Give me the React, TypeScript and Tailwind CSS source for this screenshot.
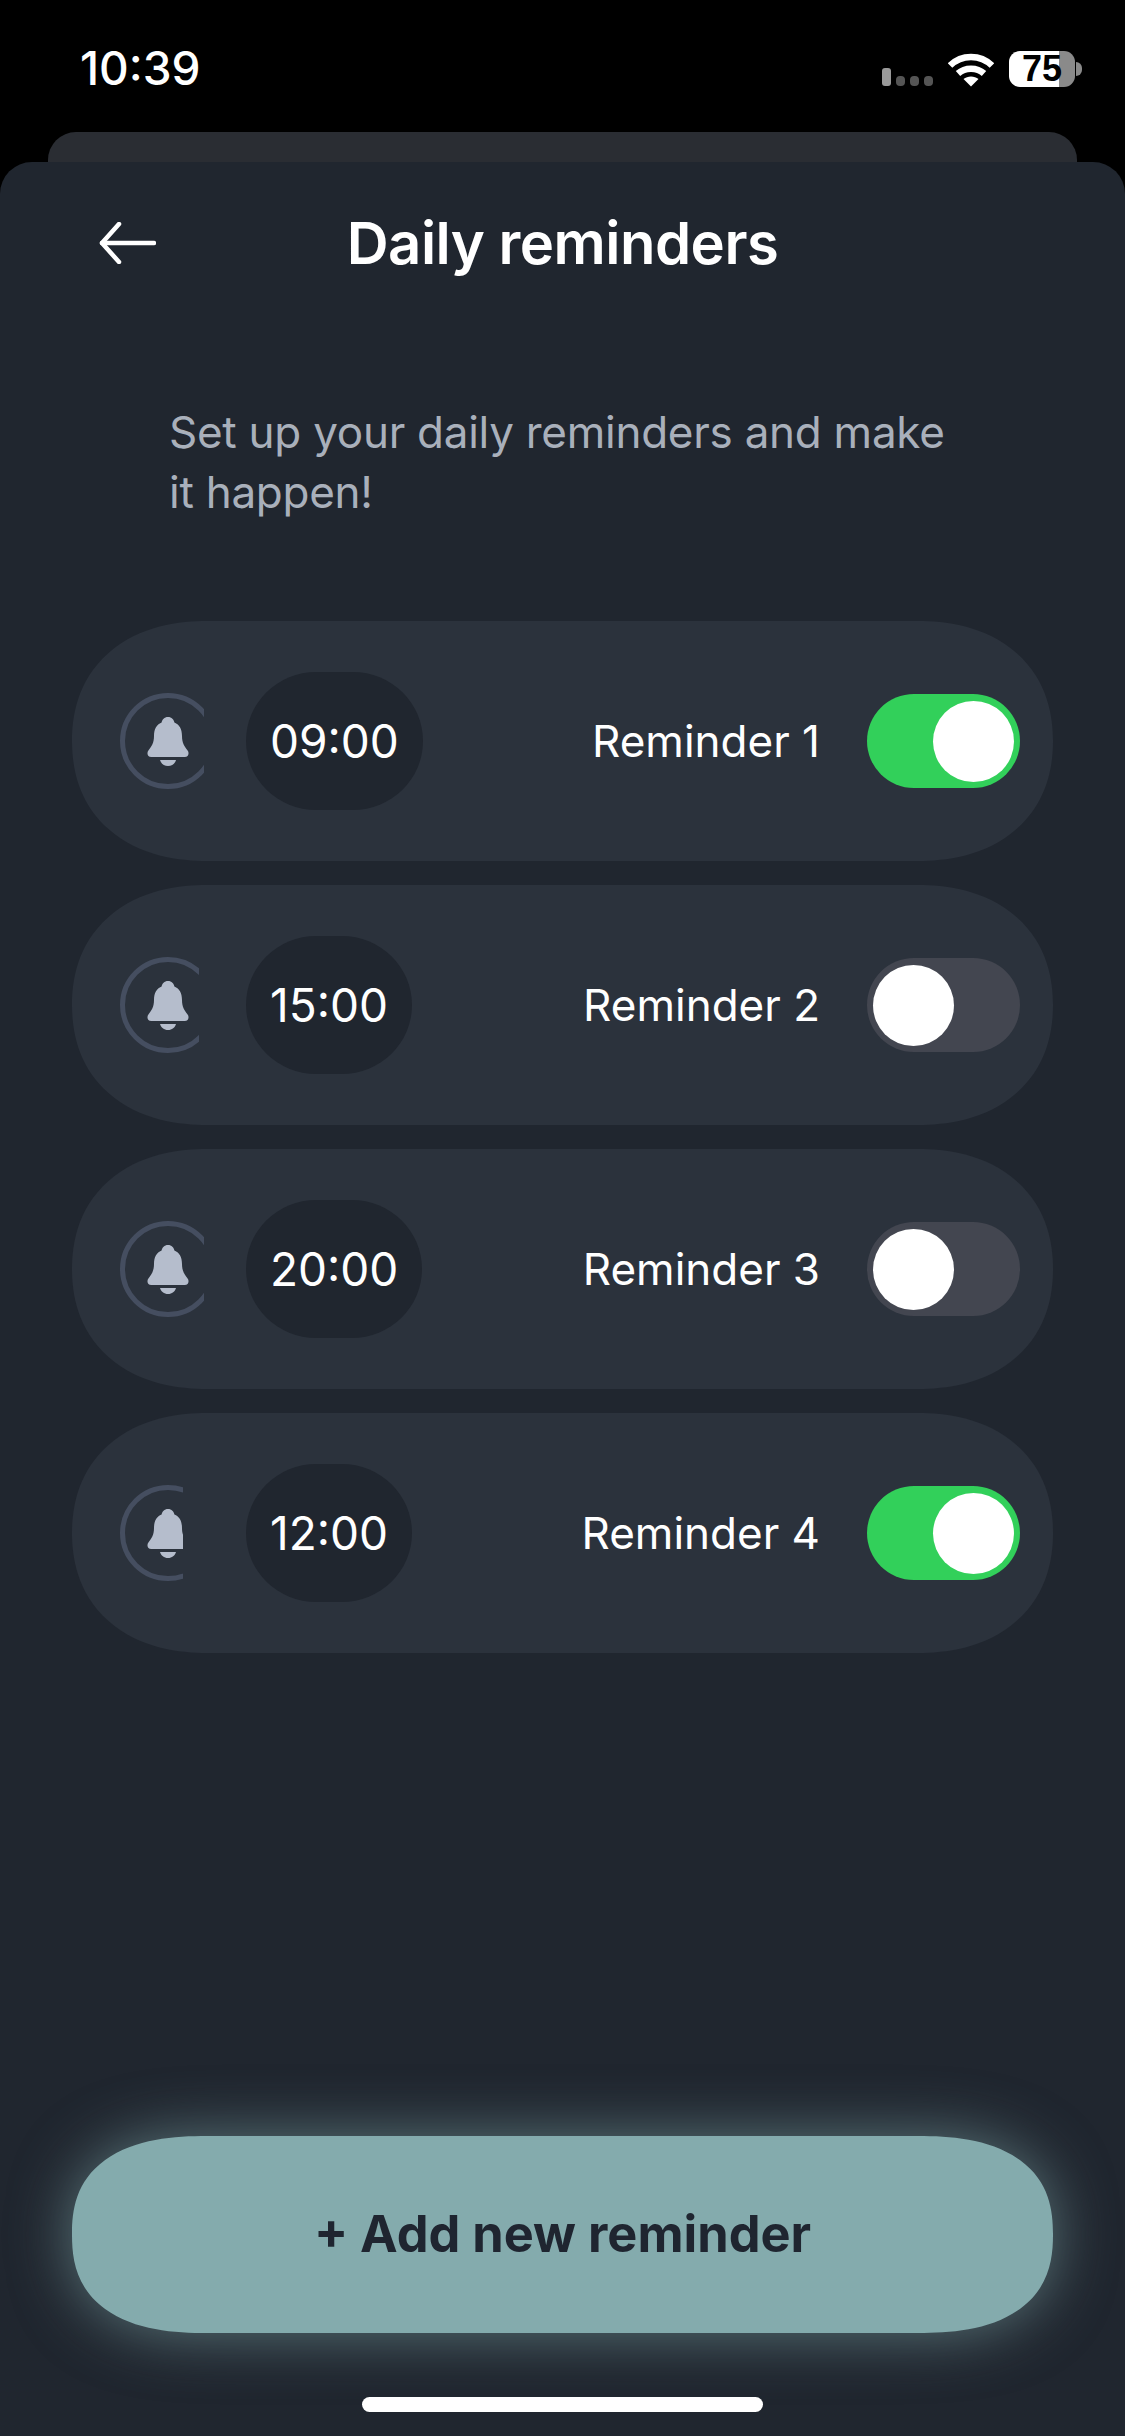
const FONT = "font-['Inter','Noto_Sans',sans-serif]";

type Reminder = { time: string; label: string; on: boolean; clip: string };

const reminders: Reminder[] = [
  { time: "09:00", label: "Reminder 1", on: true, clip: "w-[84px]" },
  { time: "15:00", label: "Reminder 2", on: false, clip: "w-[79px]" },
  { time: "20:00", label: "Reminder 3", on: false, clip: "w-[84px]" },
  { time: "12:00", label: "Reminder 4", on: true, clip: "w-[63px]" },
];

function BellBadge({ clip }: { clip: string }) {
  return (
    <div className="w-[126px] shrink-0">
      <div className={`${clip} h-[96px] overflow-hidden`}>
        <div className="w-[96px] h-[96px] rounded-full border-[5px] border-[#454e60] flex items-center justify-center">
          <svg width="42" height="49" viewBox="0 0 42 49" fill="#b5bdcc">
            <path d="M21 0c3.6 0 6 2.6 6.4 5.6C32.6 7.6 35 12.4 35 19c0 7 2.6 10.6 5.6 14.4 1.9 2.5.9 6.600-2.900 6.600H4.300C.5 40-.5 35.900 1.400 33.400 4.400 29.600 7 26 7 19c0-6.600 2.400-11.400 7.600-13.400C15 2.600 17.400 0 21 0z" />
            <path d="M13 43h16c-1 3.600-4 6-8 6s-7-2.400-8-6z" />
          </svg>
        </div>
      </div>
    </div>
  );
}

function Toggle({ on }: { on: boolean }) {
  return (
    <div
      className={`w-[153px] h-[94px] shrink-0 rounded-full flex items-center px-[6px] ${
        on ? "bg-[#32d05a] justify-end" : "bg-[#434650] justify-start"
      }`}
    >
      <div className="w-[81px] h-[81px] rounded-full bg-white" />
    </div>
  );
}

function ReminderRow({ time, label, on, clip }: Reminder) {
  return (
    <div className="h-[240px] rounded-[135px/120px] [corner-shape:superellipse(1.15)] bg-[#2b323c] flex items-center pl-[48px] pr-[33px]">
      <BellBadge clip={clip} />
      <div className="h-[138px] rounded-[70px/69px] bg-[#20262f] px-[24px] flex items-center text-white text-[46px] leading-none">
        {time}
      </div>
      <div className="ml-auto mr-[47px] text-white text-[44px] leading-none">{label}</div>
      <Toggle on={on} />
    </div>
  );
}

function StatusIcons() {
  return (
    <div className="flex items-end gap-[15px]">
      <div className="flex items-end gap-[5px] pb-[1px]">
        <div className="w-[9px] h-[18px] rounded-[3px] bg-[#9a9a9a]" />
        <div className="w-[9px] h-[10px] rounded-[4px] bg-[#555555]" />
        <div className="w-[9px] h-[10px] rounded-[4px] bg-[#555555]" />
        <div className="w-[9px] h-[10px] rounded-[4px] bg-[#555555]" />
      </div>
      <svg width="46" height="34" viewBox="0 0 46 34" fill="none" stroke="white" strokeWidth="6.500">
        <path d="M2 12.500C13.500 1 32.500 1 44 12.500" />
        <path d="M10 20.500C17 14 29 14 36 20.500" />
        <path d="M23 33.500L15.500 26C19.500 22.500 26.500 22.500 30.500 26Z" fill="white" stroke="none" />
      </svg>
      <div className="flex items-center">
        <div className="relative w-[66px] h-[36px] flex">
          <div className="w-[50px] h-full rounded-l-[11px] bg-white" />
          <div className="w-[16px] h-full rounded-r-[11px] bg-[#8a8a8a]" />
          <span className="absolute left-[13px] top-[4px] font-['Liberation_Sans',sans-serif] text-black text-[36px] leading-[28px] font-bold">
            75
          </span>
        </div>
        <div className="w-[6px] h-[14px] ml-[1px] rounded-r-full bg-[#8a8a8a]" />
      </div>
    </div>
  );
}

export default function App() {
  return (
    <div className={`${FONT} w-[1125px] h-[2436px] bg-black flex flex-col overflow-hidden`}>
      <div className="h-[132px] shrink-0 pl-[80px] pr-[43px] pt-[48px] flex items-start justify-between">
        <span className="text-white text-[46px] leading-[40px] font-medium">10:39</span>
        <div className="pt-[3px]">
          <StatusIcons />
        </div>
      </div>
      <div className="h-[30px] shrink-0 mx-[48px] rounded-t-[28px] bg-[#2a2d33]" />

      <div className="flex-1 rounded-t-[32px] bg-[#20262f] flex flex-col">
        <div className="h-[162px] shrink-0 grid grid-cols-[1fr_auto_1fr] items-center">
          <div className="pl-[99px]">
            <svg width="57" height="42" viewBox="0 0 57 42" fill="none" stroke="white" strokeWidth="4.500" strokeLinecap="round" strokeLinejoin="round">
              <path d="M55 21H3" />
              <path d="M20 2L3 21l17 19" />
            </svg>
          </div>
          <h1 className="text-white text-[58px] leading-none font-semibold tracking-[-0.5px]">Daily reminders</h1>
          <div />
        </div>

        <p className="mt-[78px] ml-[169px] w-[800px] text-[#a9b0bb] text-[44px] leading-[60px] tracking-[-0.26px]">
          Set up your daily reminders and make
          <br />
          it happen!
        </p>

        <div className="mt-[99px] mx-[72px] flex flex-col gap-[24px]">
          {reminders.map((r) => (
            <ReminderRow key={r.label} {...r} />
          ))}
        </div>

        <div className="mt-auto mx-[72px]">
          <button className="w-full h-[197px] rounded-[135px/98px] [corner-shape:superellipse(1.3)] bg-[#84abad] shadow-[0_0_60px_rgba(132,171,173,0.6)] text-[#1f2530] text-[50.5px] leading-none font-bold">
            + Add new reminder
          </button>
        </div>

        <div className="mt-[64px] mb-[24px] mx-auto w-[401px] h-[15px] rounded-[8px] bg-white" />
      </div>
    </div>
  );
}
